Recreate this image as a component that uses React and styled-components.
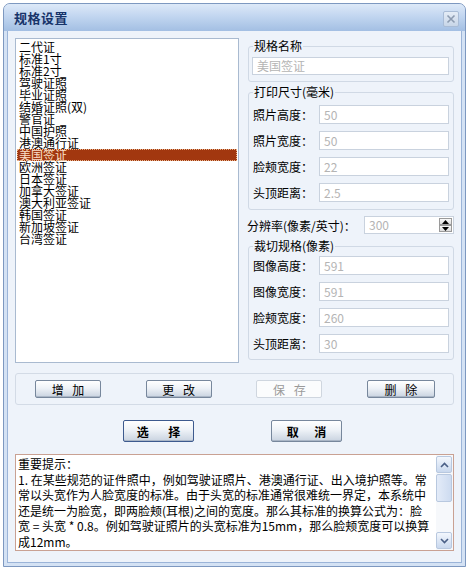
import React from "react";
import styled, { createGlobalStyle } from "styled-components";

const GlobalStyle = createGlobalStyle`
  html, body { margin: 0; padding: 0; background: #ffffff; }
  body {
    font-family: "Noto Sans CJK SC", "Noto Sans", sans-serif;
    font-size: 12px;
    color: #000;
  }
  * { box-sizing: border-box; }
`;

const Window = styled.div`
  margin: 3px 0 0 3px;
  width: 463px;
  height: 564px;
  border: 1px solid #7d98c0;
  border-radius: 7px 7px 0 0;
  background: #d4e2f4;
  display: flex;
  flex-direction: column;
  overflow: hidden;
`;

const TitleBar = styled.div`
  height: 27px;
  flex: none;
  display: flex;
  align-items: center;
  justify-content: space-between;
  padding: 0 6px 0 10px;
  background: linear-gradient(#dde9f8 0%, #c2d6f0 45%, #a3bfe3 100%);
`;

const Title = styled.div`
  font-size: 13px;
  font-weight: bold;
  color: #17346a;
  letter-spacing: 0.5px;
`;

const CloseBtn = styled.div`
  width: 16px;
  height: 16px;
  margin-top: 2px;
  border: 1px solid #a9bcd6;
  border-radius: 2px;
  background: linear-gradient(#e4ecf6, #c8d6e8);
  display: flex;
  align-items: center;
  justify-content: center;
`;

const Body = styled.div`
  flex: 1;
  margin: 0 3px 3px;
  border: 1px solid #9bb4d8;
  border-top: none;
  background: #eef3fa;
  padding: 7px 7px 7px;
  display: flex;
  flex-direction: column;
`;

const Top = styled.div`
  display: grid;
  grid-template-columns: 224px 1fr;
  column-gap: 7px;
  height: 325px;
`;

const ListBox = styled.div`
  border: 1px solid #a9bad0;
  background: #ffffff;
  padding: 2px 1px;
  height: 325px;
`;

const Item = styled.div`
  height: 12px;
  line-height: 12px;
  font-size: 12px;
  padding-left: 2px;
  white-space: nowrap;
  background: ${(p) => (p.$selected ? "#a2370f" : "transparent")};
  color: ${(p) => (p.$selected ? "#fbe0c8" : "#000")};
  outline: ${(p) => (p.$selected ? "1px dotted #e8b48c" : "none")};
  outline-offset: -1px;
`;

const RightCol = styled.div`
  display: flex;
  flex-direction: column;
`;

const Group = styled.fieldset`
  margin: ${(p) => p.$mt}px 0 0 2px;
  padding: ${(p) => p.$pt}px 4px ${(p) => p.$pb}px 3px;
  border: 1px solid #d0d9e5;
  border-radius: 3px;
  min-width: 0;
  display: flex;
  flex-direction: column;
  gap: 7px;
`;

const Legend = styled.legend`
  padding: 0 1px;
  margin-left: 1px;
  font-size: 12px;
  line-height: 12px;
  color: #000;
`;

const Row = styled.div`
  display: grid;
  grid-template-columns: 67px 1fr;
  align-items: center;
`;

const Label = styled.span`
  padding-left: 1px;
  font-size: 12px;
  white-space: nowrap;
`;

const Field = styled.div`
  height: ${(p) => p.$h || 19}px;
  border: 1px solid #c9d2de;
  background: #ffffff;
  color: #b4b4b4;
  font-size: 12px;
  line-height: ${(p) => (p.$h || 19) - 2}px;
  padding-left: 4px;
`;

const SpinRow = styled.div`
  margin-top: 6px;
  display: grid;
  grid-template-columns: 118px 1fr;
  align-items: center;
  height: 18px;
`;

const Spin = styled.div`
  height: 18px;
  border: 1px solid #c9d2de;
  background: #ffffff;
  display: flex;
  align-items: stretch;
`;

const SpinValue = styled.div`
  flex: 1;
  color: #b4b4b4;
  line-height: 16px;
  padding-left: 4px;
`;

const SpinButtons = styled.div`
  width: 13px;
  margin: 1px 1px 1px 0;
  display: flex;
  flex-direction: column;
  gap: 0;
`;

const SpinBtn = styled.div`
  flex: 1;
  background: linear-gradient(#fafafa, #dcdcdc);
  border: 1px solid #9a9a9a;
  display: flex;
  align-items: center;
  justify-content: center;
`;

const ActionBar = styled.div`
  margin-top: 10px;
  height: 32px;
  border: 1px solid #d3dbe6;
  border-radius: 3px;
  display: flex;
  align-items: center;
  justify-content: space-between;
  padding: 0 18px 0 19px;
`;

const Button = styled.div`
  width: ${(p) => p.$w || 66}px;
  height: ${(p) => p.$h || 18}px;
  display: flex;
  align-items: center;
  justify-content: center;
  font-size: 12px;
  font-weight: ${(p) => (p.$bold ? "bold" : "normal")};
  word-spacing: ${(p) => p.$ws || 6}px;
  white-space: pre;
  border-radius: 2px;
  border: 1px solid
    ${(p) => (p.$disabled ? "#cfd6df" : p.$default ? "#3d5a8e" : "#77879c")};
  color: ${(p) => (p.$disabled ? "#9a9a9a" : "#000")};
  background: ${(p) =>
    p.$disabled
      ? "#fbfcfd"
      : "linear-gradient(#ffffff 0%, #eef2f7 45%, #c9d3e0 100%)"};
  box-shadow: ${(p) =>
    p.$disabled ? "none" : "inset 0 -1px 0 #aab6c6"};
`;

const MainButtons = styled.div`
  margin-top: 15px;
  display: flex;
  justify-content: center;
  gap: 77px;
  padding-right: 4px;
`;

const Notes = styled.div`
  margin-top: 12px;
  height: 97px;
  border: 1px solid #c9a193;
  background: #ffffff;
  display: flex;
`;

const NoteText = styled.div`
  flex: 1;
  padding: 1px 0 0 2px;
  font-size: 12px;
  line-height: 15.5px;
  color: #000;
`;

const NoteLine = styled.div`
  white-space: nowrap;
`;

const ScrollBar = styled.div`
  width: 17px;
  padding: 1px 1px 1px 0;
  display: flex;
  flex-direction: column;
  background: #f6f8fb;
`;

const ScrollBtn = styled.div`
  height: 17px;
  border: 1px solid #b8c8df;
  border-radius: 2px;
  background: linear-gradient(#f3f7fd, #c9d8ee);
  display: flex;
  align-items: center;
  justify-content: center;
`;

const Thumb = styled.div`
  height: 28px;
  margin-top: 1px;
  border: 1px solid #b8c8df;
  border-radius: 2px;
  background: linear-gradient(90deg, #e3ebf8, #cddbf0);
`;

const Track = styled.div`
  flex: 1;
`;

const items = [
  "二代证",
  "标准1寸",
  "标准2寸",
  "驾驶证照",
  "毕业证照",
  "结婚证照(双)",
  "警官证",
  "中国护照",
  "港澳通行证",
  "美国签证",
  "欧洲签证",
  "日本签证",
  "加拿大签证",
  "澳大利亚签证",
  "韩国签证",
  "新加坡签证",
  "台湾签证",
];

const print = [
  ["照片高度：", "50"],
  ["照片宽度：", "50"],
  ["脸颊宽度：", "22"],
  ["头顶距离：", "2.5"],
];

const crop = [
  ["图像高度：", "591"],
  ["图像宽度：", "591"],
  ["脸颊宽度：", "260"],
  ["头顶距离：", "30"],
];

const noteLines = [
  "重要提示：",
  "1. 在某些规范的证件照中，例如驾驶证照片、港澳通行证、出入境护照等。常",
  "常以头宽作为人脸宽度的标准。由于头宽的标准通常很难统一界定，本系统中",
  "还是统一为脸宽，即两脸颊(耳根)之间的宽度。那么其标准的换算公式为：脸",
  "宽 = 头宽 * 0.8。例如驾驶证照片的头宽标准为15mm，那么脸颊宽度可以换算",
  "成12mm。",
];

const Chevron = ({ up }) => (
  <svg width="9" height="6" viewBox="0 0 9 6">
    <path
      d={up ? "M1 5 L4.5 1.5 L8 5" : "M1 1 L4.5 4.5 L8 1"}
      fill="none"
      stroke="#4a5f86"
      strokeWidth="1.6"
    />
  </svg>
);

const Tri = ({ up }) => (
  <svg width="7" height="4" viewBox="0 0 7 4">
    <path d={up ? "M0 4 L3.5 0 L7 4 Z" : "M0 0 L3.5 4 L7 0 Z"} fill="#000" />
  </svg>
);

export default function App() {
  return (
    <>
      <GlobalStyle />
      <Window>
        <TitleBar>
          <Title>规格设置</Title>
          <CloseBtn>
            <svg width="10" height="10" viewBox="0 0 10 10">
              <path
                d="M1.5 1.5 L8.5 8.5 M8.5 1.5 L1.5 8.5"
                stroke="#8c9bb0"
                strokeWidth="1.6"
              />
            </svg>
          </CloseBtn>
        </TitleBar>
        <Body>
          <Top>
            <ListBox>
              {items.map((t) => (
                <Item key={t} $selected={t === "美国签证"}>
                  {t}
                </Item>
              ))}
            </ListBox>
            <RightCol>
              <Group $mt={2} $pt={5} $pb={6}>
                <Legend>规格名称</Legend>
                <Field $h={18}>美国签证</Field>
              </Group>
              <Group $mt={4} $pt={7} $pb={7}>
                <Legend>打印尺寸(毫米)</Legend>
                {print.map(([l, v]) => (
                  <Row key={l}>
                    <Label>{l}</Label>
                    <Field>{v}</Field>
                  </Row>
                ))}
              </Group>
              <SpinRow>
                <Label>分辨率(像素/英寸)：</Label>
                <Spin>
                  <SpinValue>300</SpinValue>
                  <SpinButtons>
                    <SpinBtn>
                      <Tri up />
                    </SpinBtn>
                    <SpinBtn>
                      <Tri />
                    </SpinBtn>
                  </SpinButtons>
                </Spin>
              </SpinRow>
              <Group $mt={6} $pt={4} $pb={6}>
                <Legend>裁切规格(像素)</Legend>
                {crop.map(([l, v]) => (
                  <Row key={l}>
                    <Label>{l}</Label>
                    <Field>{v}</Field>
                  </Row>
                ))}
              </Group>
            </RightCol>
          </Top>
          <ActionBar>
            <Button>增 加</Button>
            <Button>更 改</Button>
            <Button $disabled>保 存</Button>
            <Button $w={68}>删 除</Button>
          </ActionBar>
          <MainButtons>
            <Button $w={71} $h={22} $bold $default $ws={17}>
              选 择
            </Button>
            <Button $w={71} $h={22} $bold $ws={13}>
              取 消
            </Button>
          </MainButtons>
          <Notes>
            <NoteText>
              {noteLines.map((l, i) => (
                <NoteLine key={i}>{l}</NoteLine>
              ))}
            </NoteText>
            <ScrollBar>
              <ScrollBtn>
                <Chevron up />
              </ScrollBtn>
              <Thumb />
              <Track />
              <ScrollBtn>
                <Chevron />
              </ScrollBtn>
            </ScrollBar>
          </Notes>
        </Body>
      </Window>
    </>
  );
}
